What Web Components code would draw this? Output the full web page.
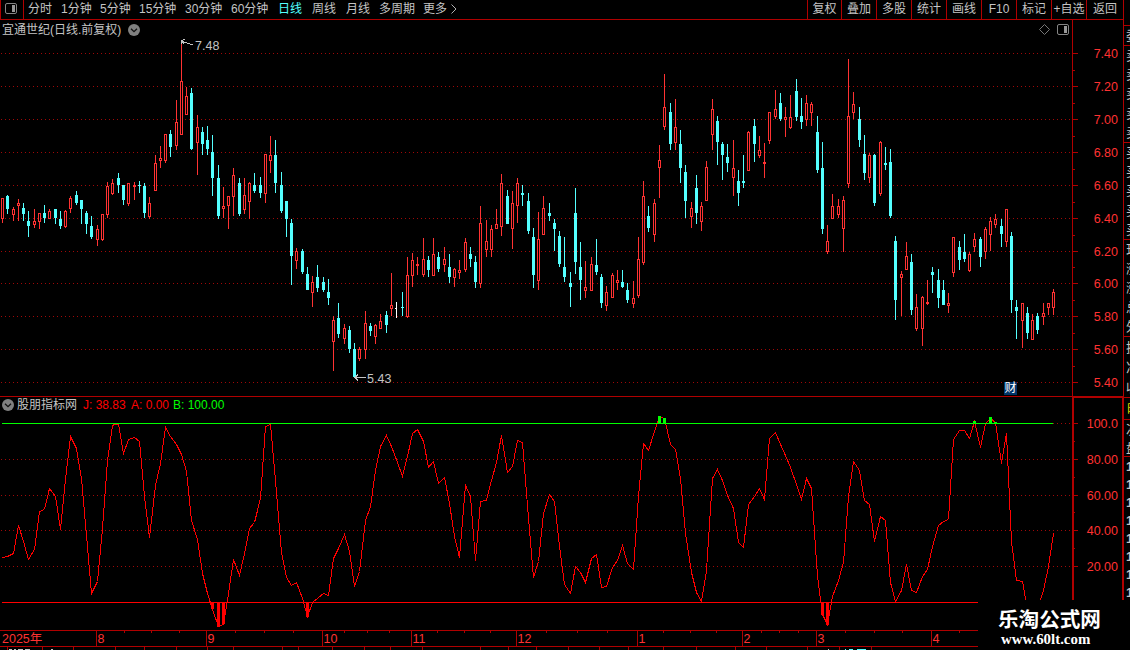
<!DOCTYPE html>
<html lang="zh-CN">
<head>
<meta charset="utf-8">
<title>宜通世纪</title>
<style>
  body {
    margin: 0;
    background: #000;
    overflow: hidden;
  }
</style>
</head>
<body>
<stock-app></stock-app>

<script>
const LINE = '#b00000';
const RED = '#ff3232';
const CYAN = '#54ffff';

// candles: centre, high, body top, body bottom, low (three units to a pixel)
const CANDLES = [
  { x: 0, y: 30, rows: `
r 7 504 504 567 579|c 22 495 498 537 552|r 40 531 537 555 573|r 55 507 519 528 573|c 70 519 534 552 573
c 85 543 573 588 621|r 103 537 573 585 594|r 118 549 549 576 597|c 133 525 549 564 579|r 148 537 543 567 567
c 166 537 537 564 582|c 181 543 567 588 597|r 196 540 543 591 594|r 211 498 504 537 549|c 229 483 495 519 525
c 244 510 510 537 582|c 259 543 549 582 612|c 274 558 588 621 627|r 292 585 597 630 648|r 307 552 552 630 633
r 322 456 468 555 564|r 337 447 459 492 495|c 355 429 444 465 489|c 370 465 465 510 525|r 385 459 459 522 528
r 403 456 465 471 510|c 418 453 465 468 489|c 433 459 468 549 564|r 448 501 519 561 567|r 466 375 399 483 483
r 481 348 384 393 414|r 496 312 312 393 399|c 511 300 312 351 381|r 529 210 276 348 360|r 544 33 153 315 315
r 559 171 198 255 255|c 574 174 189 357 360|r 592 255 291 339 435|c 607 291 306 342 375|c 622 288 330 357 375
c 637 315 366 444 498|c 655 405 444 558 567` },
  { x: 200, y: 120, rows: `
r 70 201 258 267 294|r 85 228 228 258 327|r 100 144 165 231 288|c 118 174 189 282 288|r 133 174 225 270 282
r 148 186 189 246 297|c 163 159 195 213 219|c 181 171 195 219 234|r 196 102 102 222 249|r 211 48 105 123 159
c 226 60 105 189 219|c 244 156 195 273 279|c 259 243 243 297 351|c 274 297 309 408 495|r 289 384 393 423 447
c 307 387 393 456 462|c 322 441 462 510 510|r 337 468 486 519 561|c 352 435 471 504 516|c 370 471 486 510 516
c 385 477 516 534 555|r 400 588 600 666 753|c 415 549 594 642 654|r 433 612 624 657 672|c 448 618 630 687 699
c 463 669 687 771 771|r 478 681 687 717 723|r 496 573 609 690 717|c 511 609 618 633 648|r 526 612 615 651 672
r 541 582 603 627 627|c 559 573 585 615 639|r 574 459 555 567 588|w 589 546 564 567 594|c 607 516 561 564 588` },
  { x: 400, y: 160, rows: `
r 22 291 345 471 474|r 37 279 300 348 381|r 52 291 312 318 345|r 70 234 297 345 351|c 85 288 300 330 351
r 100 234 282 348 348|c 115 276 291 327 336|r 133 261 297 315 336|c 148 282 321 351 369|r 163 324 327 354 381
r 178 300 330 339 357|r 196 234 246 330 336|c 211 261 282 297 321|c 226 288 306 366 384|r 241 138 189 372 384
r 259 180 243 270 291|r 274 195 207 270 291|r 289 147 192 207 207|r 304 42 69 201 228|c 322 90 108 192 192
r 337 93 129 207 267|r 352 54 69 138 189|c 367 75 99 105 138|c 385 99 123 213 222|c 400 204 231 345 384
r 415 156 237 363 390|r 430 108 144 225 225|c 448 129 159 168 183|c 463 177 189 207 273|c 478 213 228 312 321
c 493 231 321 351 366|c 511 336 369 381 441|c 526 84 159 306 342|c 541 246 321 360 420|r 556 303 381 393 414
r 574 291 312 393 393|c 589 237 315 336 345|c 604 342 351 429 444|r 619 378 396 438 453|r 637 339 345 414 414
r 652 330 360 369 390|c 667 330 366 381 384|c 682 369 390 420 429|r 700 363 414 432 444` },
  { x: 620, y: 50, rows: `
r 55 561 627 738 744|r 70 393 438 639 645|c 85 468 498 534 546|r 103 447 459 555 576|r 118 285 330 354 444
r 133 72 171 231 240|c 151 159 186 282 300|r 166 147 231 279 300|c 181 240 282 354 399|c 196 345 366 453 504
r 214 456 474 501 534|c 229 375 414 489 522|r 244 456 468 516 543|r 259 333 351 453 453|r 277 147 177 255 300
c 292 198 213 276 345|c 307 276 282 315 390|c 322 282 321 339 366|r 340 270 354 384 438|c 355 360 393 429 468
c 370 315 393 399 414|r 385 243 246 363 363|c 403 207 228 282 336|r 418 258 300 318 324|r 433 279 336 342 384
r 448 186 186 273 282|r 466 120 177 201 207|c 481 129 159 207 213|r 496 171 201 210 261|r 511 135 201 234 237
c 529 87 123 201 213|c 544 144 198 216 237|r 559 135 159 210 228|r 574 156 162 189 228|c 592 198 246 360 369
c 607 276 354 537 552|r 622 525 573 606 612|r 637 432 468 507 507|r 655 447 468 495 504|r 670 438 450 537 606
r 685 27 198 402 414|r 700 126 162 189 207` },
  { x: 840, y: 90, rows: `
c 58 51 87 150 171|c 73 135 192 249 270|r 88 189 195 264 279|c 103 192 195 339 348|r 121 153 156 312 318
c 136 171 219 225 240|c 151 177 216 378 384|c 166 438 453 630 690|r 184 543 552 564 678|r 199 456 498 540 540
c 214 492 516 660 675|r 229 612 651 717 723|r 247 618 621 717 768|r 262 570 636 642 645|c 277 531 546 555 609
c 295 537 570 624 654|c 310 570 600 645 645|r 325 609 639 648 669|r 340 441 441 549 561|c 358 453 471 510 540
c 373 432 486 507 516|r 388 486 492 543 546|r 403 429 447 471 486|c 421 441 447 501 531|r 436 411 417 486 507
r 451 381 393 435 483|r 466 372 387 405 414|c 484 387 408 432 471|r 499 357 357 456 471|c 514 426 438 630 669
c 529 630 651 663 747|r 547 639 639 693 774|c 562 651 669 729 747|r 577 672 690 750 750|c 592 669 678 720 732
r 610 639 669 681 705|r 625 639 639 654 675|r 640 597 606 654 675` },
];

// J line, same units
const J_LINE = [
  { x: 0, y: 390, pts: `7,502 22,498 40,489 55,406 70,453 85,508 103,478 118,365 133,357 148,296 166,318 181,418 196,268 211,139
229,174 244,265 259,435 274,609 292,573 307,414 322,210 337,107 343,102 355,102 370,190 385,149 403,142 418,153 433,318
448,441 466,285 481,220 496,112 511,139 529,163 544,192 559,243 574,390 592,447 607,550 622,610 637,657 655,709 670,702
685,610 700,508 718,555 733,490 748,416 763,397 781,325 796,110 811,103 826,270 844,487 859,562 874,585 889,577 907,626
922,680 937,637 955,622 970,610 985,616 1000,505 1015,475 1033,433` },
  { x: 340, y: 400, pts: `28,455 43,559 58,513 76,362 91,320 106,212 121,140 139,107 154,140 172,187 187,230 202,168 217,100
232,89 250,125 265,202 280,184 295,250 313,233 328,310 343,408 358,472 376,257 391,290 406,482 421,305 439,300 454,240
469,188 484,107 502,217 517,198 532,121 547,128 562,315 580,532 595,485 610,340 628,284 643,303 658,440 673,553 691,580
706,500 721,518 736,547 754,475 769,463 784,563 799,558 817,502 832,482 847,437 862,490 880,507 895,290 910,130 925,152
943,95 958,50 973,55 991,133 1006,149 1021,235 1036,400 1054,517 1069,578 1084,605` },
  { x: 690, y: 400, pts: `49,512 67,235 82,209 97,240 112,287 130,325 145,427 160,442 175,312 193,288 208,266 223,298 238,115
256,98 271,132 286,167 301,201 319,252 334,298 349,235 364,265 382,530 397,642 412,672 427,590 445,540 460,487 475,290
490,185 508,210 523,302 538,312 553,424 571,350 586,360 601,547 616,605 634,570 649,493 664,570 679,578 697,530 712,508
727,440 745,376 760,365 775,358 790,118 808,91 823,91 838,115 853,65 871,142 886,70 901,55 916,68 934,190 949,100
964,425 979,541 997,545 1012,630 1036,640 1051,598 1060,570 1075,500 1090,400` },
];

const rect = (x, y, w, h, fill) => `<rect x="${x}" y="${y}" width="${w}" height="${h}" fill="${fill}"/>`;

const dots = (y, from = 1, to = 1071) =>
  `<path d="M${from} ${y + 0.5}H${to}" stroke="#a00808" stroke-dasharray="1 3"/>`;

function drawCandles() {
  let out = '';
  for (const block of CANDLES) {
    for (const row of block.rows.trim().split(/[|\n]/)) {
      const [kind, ...n] = row.split(' ');
      const cx = block.x + Math.floor(n[0] / 3);
      const [hi, top, bot, lo] = n.slice(1).map(v => block.y + Math.round(v / 3));
      const color = { r: RED, c: CYAN, w: '#fff' }[kind];
      if (kind !== 'r') {
        out += rect(cx, hi, 1, lo - hi, color);
        out += kind === 'w' ? rect(cx - 1, top, 1, 1, color) : rect(cx - 1, top, 3, bot - top, color);
        continue;
      }
      out += rect(cx, hi, 1, top - hi, color) + rect(cx, bot, 1, lo - bot, color);
      out += rect(cx - 1, top, 3, bot - top, color);
      if (bot - top > 2) out += rect(cx, top + 1, 1, bot - top - 2, '#000');
    }
  }
  return out;
}

function jPoints() {
  return J_LINE.map(b => b.pts.split(/\s+/).map(p => {
    const [x, y] = p.split(',');
    return (b.x + Math.floor(x / 3) + 0.5) + ',' + (b.y + Math.floor(y / 3) + 0.5);
  }).join(' ')).join(' ');
}

const BASE = `
  :host {
    display: block;
    box-sizing: border-box;
    font: 12px/18px "Liberation Sans", "Noto Sans CJK SC", sans-serif;
    color: #c4c4c4;
    white-space: nowrap;
  }
  svg { display: block; }
`;

class BaseElement extends HTMLElement {
  constructor() {
    super();
    this.attachShadow({ mode: 'open' });
  }
  connectedCallback() {
    this.shadowRoot.innerHTML = `<style>${BASE}${this.css()}</style>${this.html()}`;
  }
  css() { return ''; }
  html() { return '<slot></slot>'; }
}

class PanelIcon extends BaseElement {
  css() { return ':host { width: 12px; height: 11px; }'; }
  html() {
    return `<svg width="12" height="11">
      <rect x=".5" y=".5" width="11" height="10" rx="1.5" fill="none" stroke="#858585"/>
      <rect x="7" y="2" width="3" height="7" fill="#989898"/>
    </svg>`;
  }
}
customElements.define('panel-icon', PanelIcon);

class ChevronDot extends BaseElement {
  css() { return ':host { width: 12px; height: 12px; }'; }
  html() {
    return `<svg width="12" height="12">
      <circle cx="6" cy="6" r="6" fill="#808080"/>
      <path d="M3 4.7L6 7.6L9 4.7" fill="none" stroke="#111" stroke-width="1.3"/>
    </svg>`;
  }
}
customElements.define('chevron-dot', ChevronDot);

class PeriodTab extends BaseElement {
  css() {
    return `
      :host { flex: none; width: ${this.getAttribute('width')}px; line-height: 19px; }
      :host([active]) { color: ${CYAN}; }
    `;
  }
}
customElements.define('period-tab', PeriodTab);

class ToolButton extends BaseElement {
  css() {
    return `
      :host {
        flex: none;
        width: 35px;
        height: 19px;
        line-height: 19px;
        border-left: 1px solid ${LINE};
        text-align: center;
      }
      :host([narrow]) { width: 34px; }
      :host([last]) { width: 37px; }
    `;
  }
}
customElements.define('tool-button', ToolButton);

class ToolBar extends BaseElement {
  css() {
    return `
      :host { height: 20px; border-bottom: 1px solid ${LINE}; border-left: 1px solid ${LINE}; }
      .bar { display: flex; height: 19px; }
      .toggle { width: 22px; border-right: 1px solid ${LINE}; box-sizing: content-box; }
      panel-icon { margin: 3px 0 0 4px; }
      .tabs { display: flex; padding-left: 4px; flex: 1; }
      .more { padding-top: 4px; }
      .tools { display: flex; }
    `;
  }
  html() {
    const tabs = [['分时', 33], ['1分钟', 39], ['5分钟', 39], ['15分钟', 46], ['30分钟', 46], ['60分钟', 47],
      ['日线', 34], ['周线', 34], ['月线', 33], ['多周期', 44], ['更多', 28]];
    const tools = ['复权', '叠加', '多股', '统计', '画线', 'F10', '标记', '+自选', '返回'];
    return `<div class="bar">
      <div class="toggle"><panel-icon></panel-icon></div>
      <div class="tabs">
        ${tabs.map(([t, w]) => `<period-tab width="${w}"${t === '日线' ? ' active' : ''}>${t}</period-tab>`).join('')}
        <svg class="more" width="7" height="10"><path d="M.5 .5L5 5L.5 9.5" fill="none" stroke="#b0b0b0"/></svg>
      </div>
      <div class="tools">
        ${tools.map((t, i) => `<tool-button${i === 0 ? ' narrow' : i === 8 ? ' last' : ''}>${t}</tool-button>`).join('')}
      </div>
    </div>`;
  }
}
customElements.define('tool-bar', ToolBar);

class KlineChart extends BaseElement {
  css() {
    return `
      :host { position: relative; width: 1072px; height: 376px; }
      .head { position: absolute; inset: 0 3px auto 2px; display: flex; align-items: center; height: 19px; }
      .name { width: 126px; }
      .grow { flex: 1; }
      .diamond { margin-right: 7px; }
      .badge {
        position: absolute;
        left: 1004px;
        top: 362px;
        width: 13px;
        height: 13px;
        line-height: 13px;
        text-align: center;
        background: #003468;
        color: #fff;
      }
      text { font-size: 12.5px; fill: #c4c4c4; }
    `;
  }
  html() {
    const grid = [53, 86, 119, 152, 185, 218, 251, 283, 316, 349, 382];
    return `
      <svg width="1072" height="376" viewBox="0 20 1072 376" shape-rendering="crispEdges">
        ${grid.map(y => dots(y)).join('')}
        ${drawCandles()}
        <path d="M182 41.5L193 45M181.5 44V40.5L185 39.5M182 41L184 44" fill="none" stroke="#c4c4c4"/>
        <text x="195" y="50">7.48</text>
        <path d="M355 377.5H366M358 374.5L355 377.5L358 380.5" fill="none" stroke="#c4c4c4"/>
        <text x="367" y="383">5.43</text>
      </svg>
      <div class="head">
        <span class="name">宜通世纪(日线.前复权)</span>
        <chevron-dot></chevron-dot>
        <span class="grow"></span>
        <svg class="diamond" width="11" height="11"><path d="M5.5 .5L10.5 5.5L5.5 10.5L.5 5.5Z" fill="none" stroke="#777"/></svg>
        <panel-icon></panel-icon>
      </div>
      <span class="badge">财</span>`;
  }
}
customElements.define('kline-chart', KlineChart);

class IndicatorChart extends BaseElement {
  css() {
    return `
      :host { position: relative; width: 1072px; height: 233px; }
      .head { position: absolute; left: 2px; top: 0; display: flex; align-items: center; height: 16px; }
      .title { width: 66px; padding-left: 3px; }
      .j { width: 48px; color: #f00; }
      .a { width: 42px; color: #f00; }
      .b { color: #0f0; }
    `;
  }
  html() {
    const up = [[658, 416, 7], [663, 418, 5], [973, 421, 2], [989, 417, 6], [994, 422, 1]];
    const down = [[211, 7], [217, 25], [222, 22], [306, 15], [821, 13], [826, 23]];
    return `
      <svg width="1072" height="233" viewBox="0 397 1072 233" shape-rendering="crispEdges">
        ${[459, 495, 530, 566].map(y => dots(y)).join('')}
        ${dots(423, 1053)}
        <polyline points="${jPoints()}" fill="none" stroke="#f00"/>
        ${rect(2, 423, 1051, 1, '#0f0')}
        ${rect(2, 602, 1051, 1, '#f00')}
        ${up.map(([x, y, h]) => rect(x, y, 3, h, '#0f0')).join('')}
        ${down.map(([x, h]) => rect(x, 602, 3, h, '#f00')).join('')}
      </svg>
      <div class="head">
        <chevron-dot></chevron-dot>
        <span class="title">股朋指标网</span>
        <span class="j">J: 38.83</span>
        <span class="a">A: 0.00</span>
        <span class="b">B: 100.00</span>
      </div>`;
  }
}
customElements.define('indicator-chart', IndicatorChart);

class ValueAxis extends BaseElement {
  css() {
    return `
      :host { width: 51px; }
      text { font-size: 12.5px; fill: ${RED}; text-anchor: end; }
    `;
  }
  html() {
    const lower = this.getAttribute('kind') === 'indicator';
    const marks = lower
      ? [[423, '100.0'], [459, '80.00'], [495, '60.00'], [530, '40.00'], [566, '20.00']]
      : [[53, '7.40'], [86, '7.20'], [119, '7.00'], [152, '6.80'], [185, '6.60'], [218, '6.40'],
        [251, '6.20'], [283, '6.00'], [316, '5.80'], [349, '5.60'], [382, '5.40']];
    const minor = lower ? [441, 477, 512, 548] : [70, 103, 136, 169, 202, 235, 267, 300, 333, 366];
    const top = lower ? 397 : 20;
    const h = lower ? 233 : 376;
    const frame = lower
      ? rect(1072, 397, 51, 1, LINE) + rect(1072, 397, 2, 233, LINE) + rect(1122, 397, 1, 233, LINE)
      : rect(1072, 20, 1, 376, LINE);
    return `<svg width="51" height="${h}" viewBox="1072 ${top} 51 ${h}">
      <g shape-rendering="crispEdges">${frame}
        ${marks.map(([y]) => rect(1073, y, 5, 1, LINE)).join('')}
        ${minor.map(y => rect(1073, y, 2, 1, LINE)).join('')}
      </g>
      ${marks.map(([y, t]) => `<text x="1118" y="${y + 5}">${t}</text>`).join('')}
    </svg>`;
  }
}
customElements.define('value-axis', ValueAxis);

class TimeAxis extends BaseElement {
  css() {
    return `
      :host { height: 20px; }
      text { font-size: 12.5px; fill: ${RED}; }
    `;
  }
  html() {
    const months = [[96, '8'], [206, '9'], [322, '10'], [411, '11'], [516, '12'], [637, '1'], [742, '2'], [816, '3'], [931, '4']];
    const ticks = [124, 151, 179, 235, 264, 293, 344, 367, 389, 437, 464, 490, 546, 577, 607, 663, 690, 716, 761, 779, 798, 845, 874, 902, 959];
    const below = [7, 42, 73, 115, 144, 176, 207, 233, 282, 298, 332, 364, 390, 422, 480, 508, 536, 568, 599, 628, 663, 696, 735, 766, 807, 839, 871];
    // top edge of the row that runs off the window
    const cut = [[9, 3], [14, 2], [18, 5], [25, 5], [51, 2]];
    return `<svg width="1123" height="20" viewBox="0 630 1123 20">
      <g shape-rendering="crispEdges">
        ${rect(0, 630, 1123, 1, LINE)}${rect(0, 646, 1123, 1, LINE)}
        ${months.map(([x]) => rect(x, 631, 1, 15, LINE)).join('')}
        ${ticks.map(x => rect(x, 631, 1, 2, LINE)).join('')}
        ${below.map(x => rect(x, 647, 1, 3, LINE)).join('')}
        ${cut.map(([x, w]) => rect(x, 649, w, 1, '#c4c4c4')).join('')}
        ${rect(828, 649, 1, 1, '#c4c4c4')}${rect(845, 649, 1, 1, CYAN)}${rect(849, 649, 4, 1, CYAN)}${rect(857, 649, 9, 1, CYAN)}
      </g>
      <text x="2" y="643">2025年</text>
      ${months.map(([x, t]) => `<text x="${x + 1.5}" y="643">${t}</text>`).join('')}
    </svg>`;
  }
}
customElements.define('time-axis', TimeAxis);

// quote column, mostly cut by the window edge
class QuoteStrip extends BaseElement {
  css() {
    return `
      :host { width: 7px; height: 650px; border-left: 1px solid ${LINE}; overflow: hidden; padding-top: 25px; }
      section {
        border-top: 1px solid ${LINE};
        box-sizing: border-box;
        display: flex;
        flex-direction: column;
        justify-content: space-around;
        padding-left: 2px;
      }
      span { line-height: 15px; font-size: 13px; }
      .hot { color: #d8d800; padding-left: 3px; }
      .deals { font-weight: bold; }
    `;
  }
  html() {
    const groups = [[20, '委'], [97, '卖卖卖卖卖'], [97, '买买买买买'], [97, '现涨涨总外'], [61, '换净收'],
      [22, '时', 'hot'], [37, '次盘'], [145, '11111111', 'deals']];
    return groups.map(([h, t, c]) =>
      `<section class="${c || ''}" style="height:${h}px">${[...t].map(s => `<span>${s}</span>`).join('')}</section>`).join('');
  }
}
customElements.define('quote-strip', QuoteStrip);

class SiteMark extends BaseElement {
  css() {
    return `
      :host {
        position: absolute;
        right: 0;
        bottom: 0;
        width: 152px;
        height: 50px;
        padding: 5px 0 0 20px;
        background: #000;
        color: #fff;
      }
      .cn { font: 700 20.6px/26px "Noto Sans CJK SC", sans-serif; }
      .url { font: bold 14.9px/16px "Liberation Serif", serif; padding-left: 3px; }
    `;
  }
  html() { return '<div class="cn">乐淘公式网</div><div class="url">www.60lt.com</div>'; }
}
customElements.define('site-mark', SiteMark);

class StockApp extends BaseElement {
  css() {
    return `
      :host { position: relative; display: flex; width: 1130px; height: 650px; background: #000; overflow: hidden; }
      main { width: 1123px; flex: none; }
      .row { display: flex; }
      .upper { border-bottom: 1px solid ${LINE}; }
    `;
  }
  html() {
    return `
      <main>
        <tool-bar></tool-bar>
        <div class="row upper"><kline-chart></kline-chart><value-axis></value-axis></div>
        <div class="row"><indicator-chart></indicator-chart><value-axis kind="indicator"></value-axis></div>
        <time-axis></time-axis>
      </main>
      <quote-strip></quote-strip>
      <site-mark></site-mark>`;
  }
}
customElements.define('stock-app', StockApp);
</script>
</body>
</html>
